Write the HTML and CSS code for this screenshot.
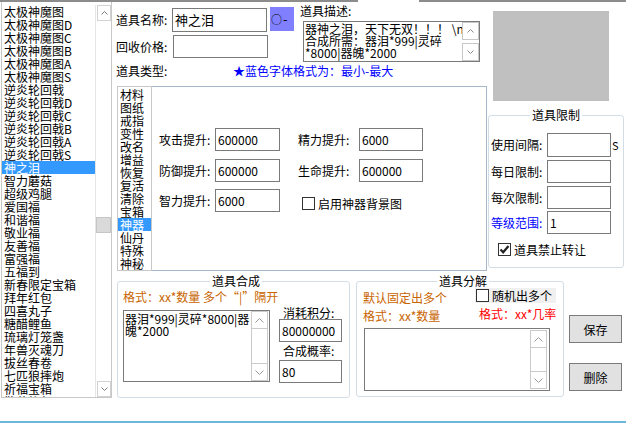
FILE: index.html
```html
<!DOCTYPE html>
<html lang="zh-CN">
<head>
<meta charset="utf-8">
<title>道具编辑</title>
<link rel="stylesheet" href="styles.css">
</head>
<body>
<div class="topline"><span class="seg seg-a"></span><span class="gap"></span><span class="seg seg-b"></span></div>
<div class="main">
  <div class="itemlist">
    <div class="items">
      <div class="item">太极神魔图</div>
      <div class="item">太极神魔图D</div>
      <div class="item">太极神魔图C</div>
      <div class="item">太极神魔图B</div>
      <div class="item">太极神魔图A</div>
      <div class="item">太极神魔图S</div>
      <div class="item">逆炎轮回戟</div>
      <div class="item">逆炎轮回戟D</div>
      <div class="item">逆炎轮回戟C</div>
      <div class="item">逆炎轮回戟B</div>
      <div class="item">逆炎轮回戟A</div>
      <div class="item">逆炎轮回戟S</div>
      <div class="item sel">神之泪</div>
      <div class="item">智力蘑菇</div>
      <div class="item">超级鸡腿</div>
      <div class="item">爱国福</div>
      <div class="item">和谐福</div>
      <div class="item">敬业福</div>
      <div class="item">友善福</div>
      <div class="item">富强福</div>
      <div class="item">五福到</div>
      <div class="item">新春限定宝箱</div>
      <div class="item">拜年红包</div>
      <div class="item">四喜丸子</div>
      <div class="item">糖醋鲤鱼</div>
      <div class="item">琉璃灯笼盏</div>
      <div class="item">年兽灭魂刀</div>
      <div class="item">拔丝春卷</div>
      <div class="item">七匹狼摔炮</div>
      <div class="item">祈福宝箱</div>
      <div class="item">散花礼包</div>
    </div>
    <div class="vscroll">
      <div class="sbtn"><svg width="7" height="4" viewBox="0 0 7 4"><polyline points="0.5,3.5 3.5,0.5 6.5,3.5" fill="none" stroke="#7a7a7a" stroke-width="1"/></svg></div>
      <div class="track"><div class="thumb"></div></div>
      <div class="sbtn"><svg width="7" height="4" viewBox="0 0 7 4"><polyline points="0.5,0.5 3.5,3.5 6.5,0.5" fill="none" stroke="#7a7a7a" stroke-width="1"/></svg></div>
    </div>
  </div>

  <div class="editor">
    <div class="upper">
      <div class="col1">
        <div class="head">
          <div class="form">
            <div class="frow">
              <span class="flabel">道具名称:</span>
              <div class="input name-input">神之泪</div>
              <div class="pick"><span class="ring">○</span><span class="dash">-</span></div>
            </div>
            <div class="frow">
              <span class="flabel w57">回收价格:</span>
              <div class="input price-input"></div>
            </div>
          </div>
          <div class="desc">
            <div class="desc-label">道具描述:</div>
            <div class="textbox desc-box">
              <div class="tb-text">器神之泪，天下无双！！！ \n<br>合成所需：器泪*999|灵碎<br>*8000|器魄*2000</div>
              <div class="sb1">
                <div class="b"><svg width="7" height="4" viewBox="0 0 7 4"><polyline points="0.5,3.5 3.5,0.5 6.5,3.5" fill="none" stroke="#8a8a8a"/></svg></div>
                <div class="b"><svg width="7" height="4" viewBox="0 0 7 4"><polyline points="0.5,0.5 3.5,3.5 6.5,0.5" fill="none" stroke="#8a8a8a"/></svg></div>
              </div>
            </div>
          </div>
        </div>
        <div class="typeline"><span class="lbl">道具类型:</span><span class="hint">★蓝色字体格式为：最小-最大</span></div>
        <div class="typearea">
          <div class="typelist">
            <div class="titem">材料</div>
            <div class="titem">图纸</div>
            <div class="titem">戒指</div>
            <div class="titem">变性</div>
            <div class="titem">改名</div>
            <div class="titem">增益</div>
            <div class="titem">恢复</div>
            <div class="titem">复活</div>
            <div class="titem">清除</div>
            <div class="titem">宝箱</div>
            <div class="titem sel">神器</div>
            <div class="titem">仙丹</div>
            <div class="titem">特殊</div>
            <div class="titem">神秘</div>
          </div>
          <div class="attrpanel">
            <div class="arow">
              <span class="alabel">攻击提升:</span><div class="input ainput">600000</div>
              <span class="alabel blabel">精力提升:</span><div class="input binput">6000</div>
            </div>
            <div class="arow">
              <span class="alabel">防御提升:</span><div class="input ainput">600000</div>
              <span class="alabel blabel">生命提升:</span><div class="input binput">600000</div>
            </div>
            <div class="arow r3">
              <span class="alabel">智力提升:</span><div class="input ainput">6000</div>
              <label class="chk bg-chk"><span class="box"></span><span class="chk-text">启用神器背景图</span></label>
            </div>
          </div>
        </div>
      </div>
      <div class="col2">
        <div class="preview"></div>
        <fieldset class="limit">
          <legend>道具限制</legend>
          <div class="lrow first">
            <span class="llabel tall">使用间隔:</span><div class="input linput tall"></div><span class="unit">S</span>
          </div>
          <div class="lrow">
            <span class="llabel">每日限制:</span><div class="input linput"></div>
          </div>
          <div class="lrow">
            <span class="llabel">每次限制:</span><div class="input linput"></div>
          </div>
          <div class="lrow r4">
            <span class="llabel blue">等级范围:</span><div class="input linput">1</div>
          </div>
          <label class="chk lock-chk"><span class="box checked"><svg width="11" height="11" viewBox="0 0 11 11"><path d="M1.5 5.5 L4.2 8.3 L9.5 2" fill="none" stroke="#222" stroke-width="2.2"/></svg></span><span class="chk-text">道具禁止转让</span></label>
        </fieldset>
      </div>
    </div>

    <div class="lower">
      <fieldset class="compose">
        <legend>道具合成</legend>
        <div class="fmt">格式：xx*数量 多个“|”隔开</div>
        <div class="crow">
          <div class="textbox compose-box">
            <div class="tb-text">器泪*999|灵碎*8000|器<br>魄*2000</div>
            <div class="sb2">
              <div class="b up"><svg width="9" height="5" viewBox="0 0 9 5"><polyline points="0.5,4.5 4.5,0.5 8.5,4.5" fill="none" stroke="#9a9a9a"/></svg></div>
              <div class="b down"><svg width="9" height="5" viewBox="0 0 9 5"><polyline points="0.5,0.5 4.5,4.5 8.5,0.5" fill="none" stroke="#9a9a9a"/></svg></div>
            </div>
          </div>
          <div class="ccol">
            <div class="clabel">消耗积分:</div>
            <div class="input cinput">80000000</div>
            <div class="clabel c2">合成概率:</div>
            <div class="input cinput">80</div>
          </div>
        </div>
      </fieldset>

      <fieldset class="decompose">
        <legend>道具分解</legend>
        <div class="drow a">
          <div class="fmt dl">默认固定出多个</div>
          <label class="chk rand-chk"><span class="box"></span><span class="chk-text">随机出多个</span></label>
        </div>
        <div class="drow b">
          <div class="fmt dl2">格式：xx*数量</div>
          <div class="red">格式：xx*几率</div>
        </div>
        <div class="textbox decomp-box">
          <div class="tb-text"></div>
          <div class="sb2">
            <div class="b up"><svg width="9" height="5" viewBox="0 0 9 5"><polyline points="0.5,4.5 4.5,0.5 8.5,4.5" fill="none" stroke="#9a9a9a"/></svg></div>
            <div class="b down"><svg width="9" height="5" viewBox="0 0 9 5"><polyline points="0.5,0.5 4.5,4.5 8.5,0.5" fill="none" stroke="#9a9a9a"/></svg></div>
          </div>
        </div>
      </fieldset>

      <div class="actions">
        <button class="btn save">保存</button>
        <button class="btn del">删除</button>
      </div>
    </div>
  </div>
</div>
<div class="bottomline"></div>
</body>
</html>
```

FILE: styles.css
```css
* { box-sizing: border-box; }
html, body { margin: 0; padding: 0; }
body {
  width: 626px;
  height: 423px;
  overflow: hidden;
  background: #fff;
  color: #000;
  font-family: "Noto Sans CJK SC", "Noto Sans", sans-serif;
  font-size: 12px;
  line-height: 13px;
}

.topline { display: flex; height: 2px; }
.topline .seg { background: #8c8c8c; }
.topline .seg-a { width: 358px; }
.topline .gap { width: 61px; }
.topline .seg-b { flex: 1; }
.main { display: flex; height: 419px; }
.bottomline { height: 2px; background: #6cb8dc; }

/* left item list */
.itemlist {
  display: flex;
  margin-left: 1px;
  width: 111px;
  height: 396px;
  border: 1px solid #c8c8c8;
  border-top: none;
  padding-top: 3px;
}
.items { flex: 1; overflow: hidden; }
.item { height: 13px; line-height: 13px; padding-left: 2px; white-space: nowrap; }
.item.sel, .titem.sel { background: #3399ff; color: #fff; }
.vscroll { width: 16px; display: flex; flex-direction: column; border-left: 1px solid #e6e6e6; }
.sbtn {
  height: 16px;
  display: flex;
  align-items: center;
  justify-content: center;
  border: 1px solid #d2d2d2;
  margin-left: 1px;
}
.track { flex: 1; }
.thumb { margin-top: 196px; height: 16px; background: #dadada; border: 1px solid #c6c6c6; }

/* editor */
.editor { width: 514px; display: flex; flex-direction: column; }
.upper { display: flex; height: 269px; }
.col1 { width: 376px; }
.head { display: flex; height: 60px; }
.form { width: 183px; padding: 5px 0 0 4px; }
.frow { display: flex; align-items: flex-start; }
.frow + .frow { margin-top: 3px; }
.flabel { width: 56px; line-height: 24px; margin-top: 1px; white-space: nowrap; }
.flabel.w57 { width: 57px; line-height: 23px; margin-top: 0; }
.input {
  border: 1px solid #7a7a7a;
  background: #fff;
  height: 23px;
  line-height: 21px;
  padding-left: 2px;
  white-space: nowrap;
  overflow: hidden;
}
.name-input { width: 95px; height: 24px; line-height: 22px; margin-top: 1px; font-size: 13px; }
.price-input { width: 95px; }
.pick {
  display: flex;
  align-items: center;
  width: 24px;
  height: 24px;
  margin-left: 3px;
  background: #8080ff;
  padding-left: 1px;
  white-space: nowrap;
  overflow: hidden;
}
.ring { font-size: 11px; line-height: 24px; width: 11px; }
.dash { line-height: 24px; margin-left: 1px; font-size: 13px; }

.desc { flex: 1; padding: 2px 0 0 5px; }
.desc-label { height: 14px; line-height: 14px; }
.textbox { display: flex; border: 1px solid #7a7a7a; background: #fff; }
.desc-box { margin: 3px 0 0 3px; width: 177px; height: 41px; }
.tb-text { flex: 1; padding: 1px 0 0 1px; line-height: 12px; white-space: nowrap; overflow: hidden; }
.sb1 { width: 17px; display: flex; flex-direction: column; justify-content: space-between; }
.sb1 .b {
  height: 18px;
  border: 1px solid #c8c8c8;
  display: flex;
  align-items: center;
  justify-content: center;
}

.typeline { display: flex; height: 24px; line-height: 18px; padding-left: 4px; }
.typeline .lbl { width: 117px; }
.hint { color: #0000ff; white-space: nowrap; }

.typearea { display: flex; height: 185px; padding-left: 5px; }
.typelist { width: 35px; border: 1px solid #c8c8c8; padding-top: 1px; overflow: hidden; }
.titem { height: 13px; line-height: 13px; padding-left: 2px; white-space: nowrap; }
.attrpanel {
  width: 335px;
  border: 1px solid #a5b7c8;
  border-left: none;
  padding: 41px 0 0 7px;
}
.arow { display: flex; height: 23px; }
.arow + .arow { margin-top: 8px; }
.arow.r3 { margin-top: 7px; }
.alabel { width: 56px; line-height: 23px; white-space: nowrap; }
.ainput { width: 65px; }
.blabel { width: 61px; margin-left: 18px; }
.binput { width: 64px; }

.chk { display: flex; align-items: center; white-space: nowrap; }
.box {
  width: 13px;
  height: 13px;
  border: 1px solid #333;
  background: #fff;
  display: flex;
  align-items: center;
  justify-content: center;
}
.chk-text { margin-left: 3px; line-height: 13px; }
.bg-chk { margin: 8px 0 0 22px; height: 13px; }

/* right column */
.col2 { width: 138px; }
.preview { margin: 9px 0 0 5px; width: 116px; height: 90px; background: #c0c0c0; }
fieldset {
  margin: 0;
  padding: 0;
  min-width: 0;
  border: 1px solid #d3dde6;
  border-radius: 3px;
}
legend { margin: 0 auto; padding: 0 2px; line-height: 12px; }
.limit { margin-top: 8px; width: 136px; height: 159px; }
.lrow { display: flex; margin-top: 3px; padding-left: 2px; }
.lrow.first { margin-top: 12px; }
.lrow.r4 { margin-top: 2px; }
.llabel { width: 56px; line-height: 23px; white-space: nowrap; }
.llabel.tall { line-height: 24px; }
.linput { width: 64px; }
.linput.tall { height: 24px; }
.unit { line-height: 24px; margin-left: 1px; font-size: 11px; }
.blue { color: #0000ff; }
.lock-chk { margin: 9px 0 0 9px; }

/* lower */
.lower { display: flex; height: 150px; padding-left: 5px; }
.compose { margin-top: 3px; width: 233px; height: 124px; padding-left: 5px; }
.compose legend, .decompose legend { line-height: 14px; }
.fmt { color: #c86400; line-height: 18px; height: 18px; white-space: nowrap; }
.crow { display: flex; }
.compose-box { margin-top: 4px; width: 147px; height: 72px; }
.compose-box .tb-text { padding-top: 2px; }
.sb2 {
  width: 17px;
  margin: 0 1px 0 0;
  border: 1px solid #cacaca;
  display: flex;
  flex-direction: column;
  justify-content: space-between;
}
.sb2 .b { height: 17px; display: flex; align-items: center; justify-content: center; }
.sb2 .up { border-bottom: 1px solid #cacaca; }
.sb2 .down { border-top: 1px solid #cacaca; }
.ccol { margin-left: 9px; width: 63px; }
.clabel { line-height: 13px; height: 13px; padding-left: 4px; white-space: nowrap; }
.clabel.c2 { line-height: 18px; height: 18px; }
.cinput { width: 63px; }

.decompose { margin: 3px 0 0 6px; width: 208px; height: 123px; padding-left: 6px; }
.drow { display: flex; }
.drow.a { height: 18px; }
.drow.b { height: 19px; }
.dl { width: 112px; padding-top: 2px; line-height: 16px; }
.dl2 { width: 116px; padding-top: 1px; }
.rand-chk { width: 81px; height: 15px; background: #f0f0f0; padding-left: 1px; }
.red { color: #ff0000; line-height: 16px; white-space: nowrap; }
.decomp-box { margin: 3px 0 0 1px; width: 186px; height: 63px; }
.decomp-box .sb2 { margin: 1px 2px 1px 0; }

.actions { margin-left: 5px; display: flex; flex-direction: column; }
.btn {
  width: 53px;
  height: 28px;
  margin: 44px 0 0 0;
  padding: 0;
  background: #e1e1e1;
  border: 1px solid #7a7a7a;
  border-radius: 0;
  font-family: "Noto Sans CJK SC", sans-serif;
  font-size: 12px;
  color: #000;
}
.btn.del { margin-top: 20px; }
```
